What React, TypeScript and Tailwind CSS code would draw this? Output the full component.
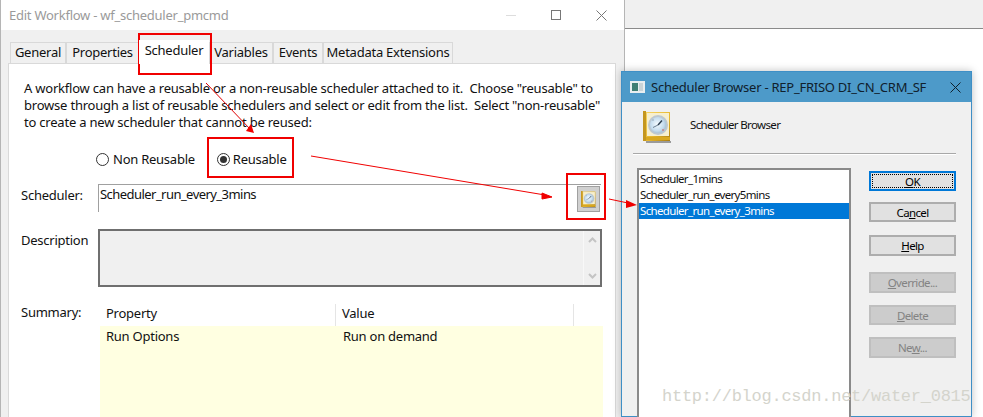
import React from 'react';

const ClockIcon = ({ className }: { className: string }) => (
    <svg viewBox="0 0 28 32" className={className}>
        <defs>
            <linearGradient id="gold" x1="0" y1="0" x2="1" y2="1">
                <stop offset="0" stopColor="#f7d76a" />
                <stop offset="0.6" stopColor="#e5b52c" />
                <stop offset="1" stopColor="#a97d12" />
            </linearGradient>
            <radialGradient id="face" cx="0.45" cy="0.45" r="0.6">
                <stop offset="0" stopColor="#f4fbff" />
                <stop offset="0.7" stopColor="#c4dcee" />
                <stop offset="1" stopColor="#9dbcd2" />
            </radialGradient>
        </defs>
        <rect x="3" y="30" width="25" height="2" fill="#9a9a9a" />
        <rect x="0" y="1" width="27" height="29" fill="url(#gold)" />
        <rect x="0" y="0" width="3" height="30" fill="#c4961f" />
        <rect x="4" y="2" width="22" height="23" fill="#f6efcf" />
        <rect x="3" y="26" width="24" height="3" fill="#d9a81f" />
        <circle cx="15" cy="14" r="10" fill="#bcc7d0" />
        <circle cx="15" cy="14" r="8" fill="url(#face)" />
        <path d="M15 14 L10 16.5" stroke="#6d8193" strokeWidth="1" />
        <path d="M15 14 L19 9.5" stroke="#2c3e50" strokeWidth="1.4" />
        <circle cx="20" cy="19" r="0.8" fill="#d9534f" />
        <circle cx="10" cy="9" r="0.8" fill="#8fa5b5" />
    </svg>
);

const DialogButton = ({ children, disabled, focused, className }: {
    children: React.ReactNode; disabled?: boolean; focused?: boolean; className: string;
}) => {
    if (focused) {
        return (
            <div className={`w-[87px] border-2 border-[#0078d7] bg-[#e1e1e1] p-px ${className}`}>
                <div className="flex h-full items-center justify-center border border-dotted border-black text-black">{children}</div>
            </div>
        );
    }
    return (
        <div className={`flex w-[87px] items-center justify-center border-2 ${disabled ? 'border-[#bfbfbf] bg-[#cccccc] text-[#838383]' : 'border-[#adadad] bg-[#e1e1e1] text-black'} ${className}`}>
            {children}
        </div>
    );
};

const Tab = ({ children, className }: { children: React.ReactNode; className: string }) => (
    <div className={`flex h-[21px] items-center justify-center border border-b-0 border-[#d9d9d9] bg-[#f0f0f0] pb-[2px] ${className}`}>{children}</div>
);

const App = () => {
    return (
        <div className="relative h-[417px] w-[983px] overflow-hidden bg-white font-['Noto_Sans',sans-serif] text-[13px] leading-[17px] tracking-[-0.25px] text-[#111]">
            {/* Window behind */}
            <div className="h-[29px] border-b border-[#8a8a8a] bg-[#f0f0f0]" />

            {/* Edit Workflow window */}
            <div className="absolute left-0 top-0 h-[417px] w-[625px] border-l border-r border-[#b5b5b5] bg-[#f0f0f0]">
                <div className="flex h-[30px] items-center bg-white pl-2 text-[#9a9a9a]">
                    <span>Edit Workflow - wf_scheduler_pmcmd</span>
                    <div className="ml-auto mr-[17px] flex items-center gap-[35px]">
                        <div className="h-px w-[10px] bg-[#dddddd]" />
                        <div className="h-[10px] w-[10px] border border-[#777]" />
                        <svg viewBox="0 0 11 11" className="h-[11px] w-[11px]">
                            <path d="M0.5 0.5 L10.5 10.5 M10.5 0.5 L0.5 10.5" stroke="#777" fill="none" />
                        </svg>
                    </div>
                </div>

                <div className="mt-[10px] flex h-[23px] items-end pl-[9px]">
                    <Tab className="w-[56px]">General</Tab>
                    <Tab className="w-[73px]">Properties</Tab>
                    <div className="relative z-10 -mb-px flex h-[24px] w-[70px] justify-center bg-white pt-[2px]">Scheduler</div>
                    <Tab className="w-[64px]">Variables</Tab>
                    <Tab className="w-[50px]">Events</Tab>
                    <Tab className="w-[130px]">Metadata Extensions</Tab>
                </div>

                <div className="ml-[7px] h-[360px] w-[608px] border border-[#d9d9d9] bg-white pl-[15px] pt-[16px]">
                    <p className="whitespace-pre tracking-[-0.21px]">{'A workflow can have a reusable or a non-reusable scheduler attached to it.  Choose "reusable" to\nbrowse through a list of reusable schedulers and select or edit from the list.  Select "non-reusable"\nto create a new scheduler that cannot be reused:'}</p>

                    <div className="ml-[72px] mt-[18px] flex h-[20px] items-center">
                        <div className="mr-[4px] h-[13px] w-[13px] rounded-full border border-[#333] bg-white" />
                        <span>Non Reusable</span>
                        <div className="ml-[22px] mr-[3px] flex h-[13px] w-[13px] items-center justify-center rounded-full border border-[#333] bg-white">
                            <div className="h-[7px] w-[7px] rounded-full bg-[#333]" />
                        </div>
                        <span>Reusable</span>
                    </div>

                    <div className="-ml-[3px] mt-[15px] flex">
                        <div className="w-[77px] pt-[3px]">Scheduler:</div>
                        <div className="flex h-[28px] w-[503px] items-start border-l border-t border-[#a0a0a0] pl-[1px] pt-px tracking-[-0.55px]">
                            Scheduler_run_every_3mins
                        </div>
                    </div>

                    <div className="-ml-[3px] mt-[17px] flex">
                        <div className="w-[77px] pt-[3px]">Description</div>
                        <div className="flex h-[58px] w-[504px] justify-end border-2 border-[#6f6f6f] bg-[#f0f0f0]">
                            <div className="flex w-[17px] flex-col items-center justify-between border-l border-[#f8f8f8] py-[6px] text-[#c4c4c4]">
                                <svg viewBox="0 0 9 6" className="h-[6px] w-[9px]"><path d="M1 5 L4.5 1.5 L8 5" stroke="currentColor" strokeWidth="2" fill="none" /></svg>
                                <svg viewBox="0 0 9 6" className="h-[6px] w-[9px]"><path d="M1 1 L4.5 4.5 L8 1" stroke="currentColor" strokeWidth="2" fill="none" /></svg>
                            </div>
                        </div>
                    </div>

                    <div className="-ml-[3px] mt-[17px] flex">
                        <div className="w-[79px]">Summary:</div>
                        <div className="w-[503px]">
                            <div className="flex h-[22px] items-center">
                                <div className="h-full w-[236px] border-r border-[#e5e5e5] pl-[6px] pt-[1px]">Property</div>
                                <div className="h-full w-[238px] border-r border-[#e5e5e5] pl-[6px] pt-[1px]">Value</div>
                            </div>
                            <div className="flex h-[100px] bg-[#ffffe1] pt-[2px]">
                                <div className="w-[236px] pl-[6px]">Run Options</div>
                                <div className="pl-[7px]">Run on demand</div>
                            </div>
                        </div>
                    </div>
                </div>
            </div>

            {/* Scheduler Browser dialog */}
            <div className="absolute left-[621px] top-[71px] h-[346px] w-[351px] border border-[#3f8fc6] bg-[#f0f0f0] shadow-[0_0_8px_rgba(0,0,0,0.25)]">
                <div className="flex h-[30px] items-center whitespace-nowrap bg-[#4d9ac9] pl-[8px] text-[#10202c]">
                    <svg viewBox="0 0 15 12" className="mr-[6px] h-[12px] w-[15px]">
                        <rect width="15" height="12" fill="#e8eef0" />
                        <rect x="2" y="2" width="6" height="8" fill="#3f7f74" />
                        <rect x="9" y="2" width="4" height="8" fill="#c9d3d6" />
                    </svg>
                    <span>Scheduler Browser - REP_FRISO DI_CN_CRM_SF</span>
                    <svg viewBox="0 0 11 11" className="ml-auto mr-[10px] h-[11px] w-[11px]">
                        <path d="M0.5 0.5 L10.5 10.5 M10.5 0.5 L0.5 10.5" stroke="#10202c" fill="none" />
                    </svg>
                </div>

                <div className="text-[11.5px] tracking-[-0.65px]">
                    <div className="ml-[21px] mt-[9px] flex h-[32px] items-center">
                        <ClockIcon className="h-[32px] w-[28px]" />
                        <span className="mb-[6px] ml-[19px]">Scheduler Browser</span>
                    </div>

                    <div className="ml-[11px] mt-[10px] h-[2px] w-[323px] border-b border-white bg-[#a8a8a8]" />

                    <div className="mt-[13px] flex">
                        <div className="ml-[15px] h-[260px] w-[214px] border-2 border-[#8a8a8a] bg-white pt-[1px]">
                            <div className="h-[16px] pl-px leading-[15px]">Scheduler_1mins</div>
                            <div className="h-[16px] pl-px leading-[15px]">Scheduler_run_every5mins</div>
                            <div className="h-[16px] bg-[#0078d7] pl-px leading-[15px] text-white">Scheduler_run_every_3mins</div>
                        </div>
                        <div className="ml-[18px] mt-[3px] flex flex-col">
                            <DialogButton focused className="h-[20px]"><span><u>O</u>K</span></DialogButton>
                            <DialogButton className="mt-[11px] h-[20px]"><span>Ca<u>n</u>cel</span></DialogButton>
                            <DialogButton className="mt-[13px] h-[21px]"><span><u>H</u>elp</span></DialogButton>
                            <DialogButton disabled className="mt-[16px] h-[21px]"><span><u>O</u>verride...</span></DialogButton>
                            <DialogButton disabled className="mt-[12px] h-[20px]"><span><u>D</u>elete</span></DialogButton>
                            <DialogButton disabled className="mt-[12px] h-[21px]"><span>Ne<u>w</u>...</span></DialogButton>
                        </div>
                    </div>
                </div>
            </div>

            {/* Red annotations */}
            <div className="absolute left-[138px] top-[33px] h-[42px] w-[74px] border-2 border-[#f00000]" />
            <div className="absolute left-[207px] top-[137px] h-[41px] w-[87px] border-2 border-[#f00000]" />
            <div className="absolute left-[566px] top-[173px] h-[47px] w-[40px] border-2 border-[#f00000]" />

            <div className="absolute left-[577px] top-[186px] flex h-[26px] w-[23px] items-center justify-center border border-[#a0a0a0] bg-[#d0d0d0]">
                <ClockIcon className="h-[17px] w-[15px]" />
            </div>

            <svg viewBox="0 0 983 417" className="pointer-events-none absolute left-0 top-0 h-[417px] w-[983px]">
                <path d="M206 83 L250 129" stroke="#e00000" strokeWidth="1" fill="none" />
                <path d="M254 133 L246 131 L251 124 Z" fill="#f00000" />
                <path d="M311 156 L545 195" stroke="#f00000" strokeWidth="1" fill="none" />
                <path d="M552 197 L542 193 L542 199 Z" fill="#f00000" stroke="#f00000" strokeWidth="1" />
                <path d="M609 199 L628 203" stroke="#f00000" strokeWidth="1" fill="none" />
                <path d="M637 205 L626 200 L626 208 Z" fill="#f00000" />
            </svg>

            {/* Watermark */}
            <div className="absolute left-[662px] top-[386px] font-['Liberation_Mono',monospace] text-[17px] leading-[22px] text-[#d4d4cc]">
                http://blog.csdn.net/water_0815
            </div>
        </div>
    );
};

export default App;
